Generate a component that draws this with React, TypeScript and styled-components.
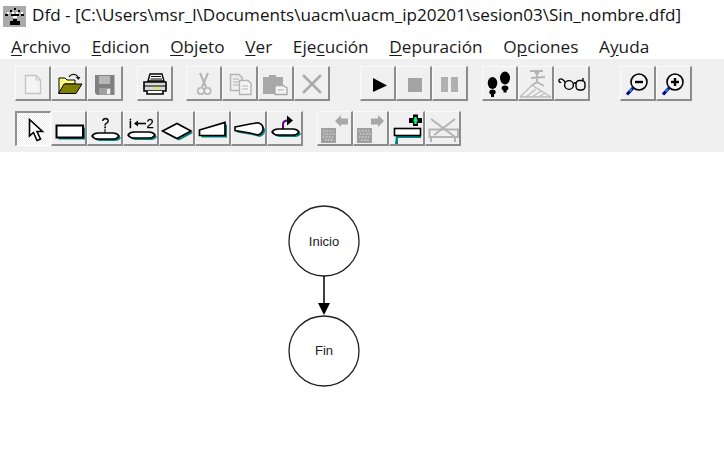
import React from "react";
import styled, { createGlobalStyle } from "styled-components";

const GlobalStyle = createGlobalStyle`
    html, body {
        margin: 0;
        padding: 0;
        background: #fff;
    }
`;

const GRAY = "#b4b4b4";
const DARK = "#808080";
const TEAL = "#008080";

const Svg = ({ children }: { children: React.ReactNode }) => (
    <svg width="36" height="35" viewBox="0 0 36 35">{children}</svg>
);

const NewIcon = () => (
    <Svg>
        <path d="M10.5 9.5H21L25.5 14V27.5H10.5Z" fill="#f4f4f4" stroke="#c4c4c4" strokeWidth="1.4" />
        <path d="M21 9.5V14H25.5" fill="none" stroke="#c4c4c4" />
    </Svg>
);

const OpenIcon = () => (
    <Svg>
        <path d="M8 12H14L16 14H24V18H14L8 27Z" fill="#ffff80" stroke="#000" />
        <path d="M7.5 27.5L13 18H31L25 27.5Z" fill="#808000" stroke="#000" />
        <path d="M18 11C20 7.5 25 7.5 27 11" fill="none" stroke="#222" strokeWidth="1.3" />
        <path d="M24.5 11H29.5L27.5 14Z" fill="#222" />
    </Svg>
);

const SaveIcon = () => (
    <Svg>
        <path d="M8 9H27.5V29H10L8 27Z" fill={DARK} />
        <rect x="12" y="10" width="11" height="8" fill="#b8b8b8" />
        <rect x="12" y="22" width="12" height="7" fill="#a0a0a0" />
        <rect x="20" y="23" width="3" height="5" fill="#eee" />
    </Svg>
);

const PrintIcon = () => (
    <Svg>
        <path d="M11 15L13 8H25L27 15Z" fill="#fff" stroke="#000" strokeWidth="1.4" />
        <path d="M14 10.5H24M13.5 13H25" stroke="#000" />
        <path d="M7 16H29V25H7Z" fill="#d8d8d8" stroke="#000" strokeWidth="1.6" />
        <path d="M7 20H29" stroke="#000" />
        <rect x="17" y="21" width="5" height="2" fill="#e8e820" />
        <path d="M10 25V28H26V25" fill="#fff" stroke="#000" strokeWidth="1.6" />
    </Svg>
);

const CutIcon = () => (
    <Svg>
        <path d="M14 7L20 21M22 7L16 21" stroke={GRAY} strokeWidth="2" fill="none" />
        <circle cx="15" cy="25" r="3.2" fill="none" stroke={GRAY} strokeWidth="1.6" />
        <circle cx="21.5" cy="25" r="3.2" fill="none" stroke={GRAY} strokeWidth="1.6" />
    </Svg>
);

const CopyIcon = () => (
    <Svg>
        <path d="M8.5 8.5H17L20 11.5V24.5H8.5Z" fill="#eee" stroke={GRAY} strokeWidth="1.4" />
        <path d="M11 13H17M11 16H17M11 19H17" stroke={GRAY} />
        <path d="M17.5 14.5H26L29 17.5V28.5H17.5Z" fill="#f4f4f4" stroke={GRAY} strokeWidth="1.4" />
        <path d="M20 20H26M20 23H26" stroke={GRAY} />
    </Svg>
);

const PasteIcon = () => (
    <Svg>
        <path d="M5 11H11V9H18V11H25V22H17V28H5Z" fill="#a8a8a8" />
        <path d="M17 19.5H25L29 22V28.5H17Z" fill="#f4f4f4" stroke="#a8a8a8" strokeWidth="1.4" />
        <path d="M20 24H26" stroke="#a8a8a8" />
    </Svg>
);

const DeleteIcon = () => (
    <Svg>
        <path d="M9 9L27 27M27 9L9 27" stroke="#ababab" strokeWidth="2.6" />
    </Svg>
);

const PlayIcon = () => (
    <Svg>
        <path d="M13 12L27 19.5L13 26Z" fill="#000" />
    </Svg>
);

const StopIcon = () => (
    <Svg>
        <rect x="12" y="12" width="14" height="14" fill="#a4a4a4" />
    </Svg>
);

const PauseIcon = () => (
    <Svg>
        <rect x="9" y="11" width="7" height="15" fill="#b0b0b0" />
        <rect x="19" y="11" width="7" height="15" fill="#b0b0b0" />
    </Svg>
);

const StepsIcon = () => (
    <Svg>
        <ellipse cx="10.5" cy="17" rx="4.8" ry="6" fill="#000" />
        <ellipse cx="10.5" cy="26" rx="3.2" ry="2.6" fill="#000" />
        <rect x="9" y="28" width="3" height="3" fill="#000" />
        <ellipse cx="23" cy="12" rx="5" ry="6.5" fill="#000" />
        <ellipse cx="23" cy="22" rx="3.4" ry="2.6" fill="#000" />
        <rect x="21.5" y="24" width="3" height="2.5" fill="#000" />
    </Svg>
);

const RunnerIcon = () => (
    <Svg>
        <circle cx="19" cy="6.5" r="2.4" fill={GRAY} />
        <path d="M12 5H25M19 9V16L13 20M19 16L26 20M13 12L27 11" stroke={GRAY} strokeWidth="1.8" fill="none" />
        <path d="M2 31L14 19L33 31M8 31L18 23M14 31L23 25M21 31L27 27M2 31H33" stroke="#bcbcbc" strokeWidth="1.3" fill="none" />
    </Svg>
);

const GlassesIcon = () => (
    <Svg>
        <circle cx="15" cy="19" r="4.4" fill="none" stroke="#000" strokeWidth="1.4" />
        <rect x="22" y="14.5" width="9" height="9.5" rx="3.5" fill="none" stroke="#000" strokeWidth="1.4" />
        <path d="M19.5 17.5C20.5 16.5 21.5 16.5 22.5 17.5M11.5 17C9.5 12.5 6 12 5 14C4.5 15.5 6 17 7 16M29 14.5V12" fill="none" stroke="#000" strokeWidth="1.4" />
    </Svg>
);

const ZoomIcon = ({ plus }: { plus?: boolean }) => (
    <Svg>
        <circle cx="19" cy="16" r="8" fill="#f4f4f4" stroke="#000" strokeWidth="1.6" />
        <path d="M15 16H23" stroke="#000" strokeWidth="2.4" />
        {plus && <path d="M19 12V20" stroke="#000" strokeWidth="2.4" />}
        <path d="M13 22L7 28.5" stroke="#000080" strokeWidth="3" />
        <path d="M12 23L9.5 25.5" stroke="#1090e0" strokeWidth="2" />
    </Svg>
);

const PointerIcon = () => (
    <Svg>
        <path d="M13.5 7.5V24L17.5 20.5L21 28.5L24.5 27L21 19.5H26.5Z" fill="#fff" stroke="#000" strokeWidth="1.6" />
    </Svg>
);

const BlockIcon = () => (
    <Svg>
        <rect x="7.5" y="16.5" width="26.5" height="12" fill={TEAL} />
        <rect x="5.5" y="14.5" width="26.5" height="12" fill="#fff" stroke="#000" strokeWidth="2" />
    </Svg>
);

const Glyph = styled.text<{ $size: number }>`
    font-family: "Liberation Sans", Arial, sans-serif;
    font-size: ${({ $size }) => $size}px;
    stroke: #000;
    stroke-width: 0.3px;
    fill: #000;
`;

// the flat lens shape that the input, assign and call blocks stand on
const Disc = ({ y = 22 }: { y?: number }) => {
    const lens = `M5 ${y + 3}Q7 ${y} 11 ${y}H26Q30 ${y} 32 ${y + 3}Q30 ${y + 6} 26 ${y + 6}H11Q7 ${y + 6} 5 ${y + 3}Z`;
    return (
        <>
            <path d={lens} fill={TEAL} transform="translate(2 2)" />
            <path d={lens} fill="#fff" stroke="#000" strokeWidth="1.5" />
        </>
    );
};

const InputIcon = () => (
    <Svg>
        <Glyph $size={14} x="14.5" y="17">?</Glyph>
        <path d="M18 18V22" stroke="#000" />
        <Disc />
    </Svg>
);

const AssignIcon = () => (
    <Svg>
        <Glyph $size={13} x="6" y="17">i</Glyph>
        <path d="M12 12.5H23" stroke="#000" strokeWidth="1.6" />
        <path d="M11 12.5L15 9.5V15.5Z" fill="#000" />
        <Glyph $size={13} x="23.5" y="17">2</Glyph>
        <Disc y={21} />
    </Svg>
);

const DecisionIcon = () => (
    <Svg>
        <path d="M3.5 20L18 12.5L32 20L18 27.5Z" fill={TEAL} transform="translate(2 2)" />
        <path d="M3.5 20L18 12.5L32 20L18 27.5Z" fill="#fff" stroke="#000" strokeWidth="1.6" />
    </Svg>
);

const LoopIcon = () => (
    <Svg>
        <path d="M4.5 19L30 11.5V24.5H4.5Z" fill={TEAL} transform="translate(2 2)" />
        <path d="M4.5 19L30 11.5V24.5H4.5Z" fill="#fff" stroke="#000" strokeWidth="1.7" />
    </Svg>
);

const OutputIcon = () => {
    const shape = "M4 16L19 13L27 11.7Q32 13 32 17.5Q32 22 27 24L19 22L4 19.5Z";
    return (
        <Svg>
            <path d={shape} fill={TEAL} transform="translate(2 2)" />
            <path d={shape} fill="#fff" stroke="#000" strokeWidth="1.6" />
        </Svg>
    );
};

const CallIcon = () => (
    <Svg>
        <path d="M16 18V13C16 10.5 18 9.5 21 9.5" fill="none" stroke="#600080" strokeWidth="2" />
        <path d="M20 4.5L26 9.5L20 14.5Z" fill="#000" />
        <Disc y={18} />
    </Svg>
);

const Dither = () => (
    <>
        <rect x="4" y="17" width="15" height="15" fill="#a0a0a0" />
        <path d="M6 20H16M7 23H18M6 26H16M8 29H17" stroke="#e4e4e4" strokeDasharray="1.5 1.5" />
    </>
);

const SubLeftIcon = () => (
    <Svg>
        <Dither />
        <path d="M18 10L24 4V7.5H31V13.5H24V16Z" fill="#a8a8a8" />
    </Svg>
);

const SubRightIcon = () => (
    <Svg>
        <Dither />
        <path d="M31 10L25 4V7.5H18V13.5H25V16Z" fill="#a8a8a8" />
    </Svg>
);

const AddIcon = () => (
    <Svg>
        <path d="M7 24H32V27H9V33H6Z" fill={TEAL} />
        <rect x="5.5" y="17.5" width="26" height="7" fill="#fff" stroke="#000" strokeWidth="1.6" />
        <path d="M20 7H24V3.5H29V7H33V12H29V15H24V12H20Z" fill="#000" />
        <path d="M24.5 9.5H28.5M26.5 6V13" stroke="#00ff80" strokeWidth="2.4" />
    </Svg>
);

const RemoveIcon = () => (
    <Svg>
        <path d="M6 8L30 26M30 8L9 24" stroke={GRAY} strokeWidth="2" />
        <path d="M4.5 18.5H33V26H4.5ZM6 26V31M30 26V31" fill="none" stroke={GRAY} strokeWidth="2" />
    </Svg>
);

const WindowIcon = () => (
    <svg width="23" height="21" viewBox="0 0 23 21">
        <rect width="23" height="21" fill="#aaa" />
        <path d="M2 9H5M7 5H9M11 3H13M15 5H17M18 9H21M8 9H16" stroke="#000" strokeWidth="2" />
        <path d="M4 7H6M9 7H11M13 7H15M18 7H20M10 11H14" stroke="#fff" strokeWidth="2" />
        <rect x="10" y="13" width="4" height="2" fill="#000" />
        <rect x="7" y="15" width="10" height="4" fill="#000" />
    </svg>
);

interface Tool {
    icon: React.ReactNode;
    pressed?: boolean;
}

const topGroups: { space: number; tools: Tool[] }[] = [
    { space: 15, tools: [{ icon: <NewIcon /> }, { icon: <OpenIcon /> }, { icon: <SaveIcon /> }] },
    { space: 14, tools: [{ icon: <PrintIcon /> }] },
    { space: 13, tools: [{ icon: <CutIcon /> }, { icon: <CopyIcon /> }, { icon: <PasteIcon /> }, { icon: <DeleteIcon /> }] },
    { space: 30, tools: [{ icon: <PlayIcon /> }, { icon: <StopIcon /> }, { icon: <PauseIcon /> }] },
    { space: 14, tools: [{ icon: <StepsIcon /> }, { icon: <RunnerIcon /> }, { icon: <GlassesIcon /> }] },
    { space: 30, tools: [{ icon: <ZoomIcon /> }, { icon: <ZoomIcon plus /> }] },
];

const bottomGroups: { space: number; tools: Tool[] }[] = [
    {
        space: 15,
        tools: [
            { icon: <PointerIcon />, pressed: true },
            { icon: <BlockIcon /> },
            { icon: <InputIcon /> },
            { icon: <AssignIcon /> },
            { icon: <DecisionIcon /> },
            { icon: <LoopIcon /> },
            { icon: <OutputIcon /> },
            { icon: <CallIcon /> },
        ],
    },
    { space: 14, tools: [{ icon: <SubLeftIcon /> }, { icon: <SubRightIcon /> }, { icon: <AddIcon /> }, { icon: <RemoveIcon /> }] },
];

const menus: [string, string, string][] = [
    ["", "A", "rchivo"],
    ["", "E", "dicion"],
    ["", "O", "bjeto"],
    ["", "V", "er"],
    ["Eje", "c", "ución"],
    ["", "D", "epuración"],
    ["O", "p", "ciones"],
    ["A", "y", "uda"],
];

const ToolRow = ({ groups }: { groups: { space: number; tools: Tool[] }[] }) => (
    <Row>
        {groups.map((group, i) => (
            <Group key={i} $space={group.space}>
                {group.tools.map((tool, j) => (
                    <ToolButton key={j} $pressed={tool.pressed}>{tool.icon}</ToolButton>
                ))}
            </Group>
        ))}
    </Row>
);

export default function App() {
    return (
        <Window>
            <GlobalStyle />
            <TitleBar>
                <WindowIcon />
                <Title>Dfd - [C:\Users\msr_l\Documents\uacm\uacm_ip20201\sesion03\Sin_nombre.dfd]</Title>
            </TitleBar>
            <MenuBar>
                {menus.map(([before, key, after]) => (
                    <MenuItem key={before + key + after}>
                        {before}<u>{key}</u>{after}
                    </MenuItem>
                ))}
            </MenuBar>
            <Toolbar>
                <ToolRow groups={topGroups} />
                <ToolRow groups={bottomGroups} />
            </Toolbar>
            <Canvas>
                <svg width="724" height="313" viewBox="0 152 724 313">
                    <circle cx="324" cy="241" r="35" fill="#fff" stroke="#222" strokeWidth="1.3" />
                    <NodeLabel x="324" y="246">Inicio</NodeLabel>
                    <path d="M324 276V304" stroke="#000" strokeWidth="1.5" />
                    <path d="M318 303H330L324 315Z" fill="#000" />
                    <circle cx="324" cy="351" r="35" fill="#fff" stroke="#222" strokeWidth="1.3" />
                    <NodeLabel x="324" y="355">Fin</NodeLabel>
                </svg>
            </Canvas>
        </Window>
    );
}

const Window = styled.div`
    width: 724px;
    height: 465px;
    overflow: hidden;
    background: #fff;
    display: flex;
    flex-direction: column;
`;

const TitleBar = styled.div`
    height: 32px;
    padding: 0 0 0 3px;
    display: flex;
    align-items: center;
    gap: 6px;
`;

const Title = styled.span`
    font-family: "Open Sans", "Noto Sans", sans-serif;
    font-size: 17.1px;
    color: #111;
    white-space: nowrap;
    margin-top: -3px;
`;

const MenuBar = styled.div`
    height: 27px;
    box-sizing: border-box;
    padding: 1px 0 0 11px;
    display: flex;
    align-items: center;
    gap: 20.7px;
`;

const MenuItem = styled.span`
    font-family: "Open Sans", "Noto Sans", sans-serif;
    font-size: 17.2px;
    color: #1a1a1a;
    white-space: nowrap;
    u {
        text-underline-offset: 2px;
    }
`;

const Toolbar = styled.div`
    height: 93px;
    box-sizing: border-box;
    padding-top: 7px;
    background: #f0f0f0;
    display: flex;
    flex-direction: column;
    gap: 10px;
`;

const Row = styled.div`
    display: flex;
    height: 35px;
`;

const Group = styled.div<{ $space: number }>`
    display: flex;
    margin-left: ${({ $space }) => $space}px;
`;

const ToolButton = styled.div<{ $pressed?: boolean }>`
    width: 36px;
    height: 35px;
    box-sizing: border-box;
    position: relative;
    border-style: solid;
    border-width: ${({ $pressed }) => ($pressed ? "2px 1px 1px 2px" : "1px 2px 2px 1px")};
    border-color: ${({ $pressed }) =>
        $pressed ? "#909090 #fff #fff #909090" : "#fafafa #8c8c8c #8c8c8c #fafafa"};
    background: ${({ $pressed }) =>
        $pressed ? "repeating-conic-gradient(#f0f0f0 0 25%, #fff 0 50%) 0 0 / 2px 2px" : "#f0f0f0"};
    svg {
        position: absolute;
        left: -1px;
        top: -1px;
        filter: blur(0.35px);
    }
`;

const Canvas = styled.div`
    flex: 1;
    background: #fff;
    svg {
        display: block;
    }
`;

const NodeLabel = styled.text`
    font-family: "Liberation Sans", Arial, sans-serif;
    font-size: 13px;
    fill: #222;
    text-anchor: middle;
`;
